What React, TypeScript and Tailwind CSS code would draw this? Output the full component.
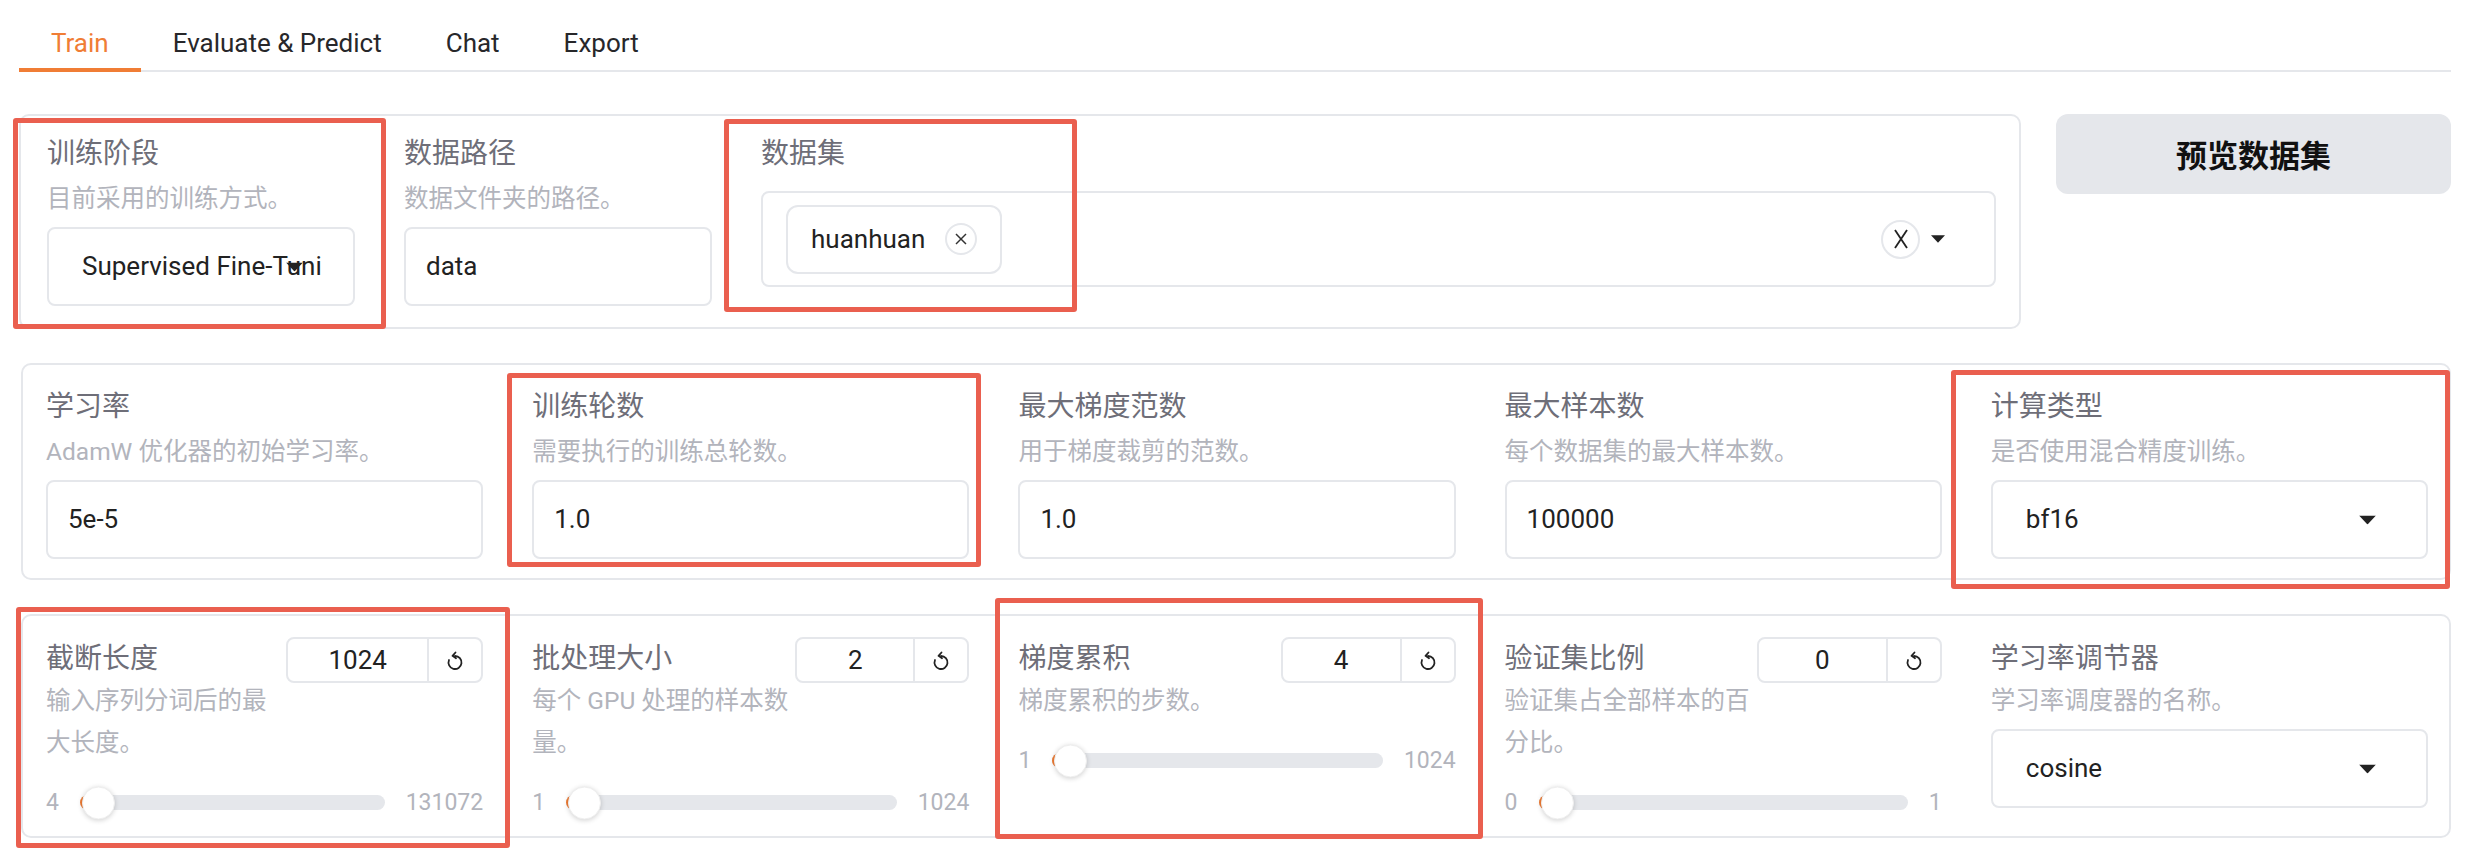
import React from "react";

const Triangle = ({ w = 17, h = 9 }: { w?: number; h?: number }) => (
  <svg width={w} height={h} viewBox="0 0 17 9" className="block">
    <polygon points="0,0 17,0 8.5,9" fill="#222" />
  </svg>
);

const XMark = ({ size = 12, stroke = 1.6 }: { size?: number; stroke?: number }) => (
  <svg width={size} height={size} viewBox="0 0 12 12" className="block">
    <line x1="1" y1="1" x2="11" y2="11" stroke="#333" strokeWidth={stroke} />
    <line x1="11" y1="1" x2="1" y2="11" stroke="#333" strokeWidth={stroke} />
  </svg>
);

const ResetIcon = () => (
  <svg width="18" height="21" viewBox="0 0 18 21" className="block" fill="none">
    <path d="M9 6 A6.5 6.5 0 1 1 3 10" stroke="#222" strokeWidth="1.8" strokeLinecap="round" />
    <path d="M9.5 2.5 L6.5 5.8 L10 8.2" stroke="#222" strokeWidth="1.8" strokeLinecap="round" strokeLinejoin="round" />
  </svg>
);

const Label = ({ children, className = "" }: { children: React.ReactNode; className?: string }) => (
  <div className={`text-[28px] leading-[36px] text-[#6e6e78] whitespace-nowrap ${className}`}>{children}</div>
);

const Desc = ({ lines, className = "" }: { lines: string[]; className?: string }) => (
  <div className={`text-[24.5px] leading-[42px] text-[#b2b4bc] ${className}`}>
    {lines.map((l, i) => (
      <div key={i} className="whitespace-nowrap">
        {l}
      </div>
    ))}
  </div>
);

const TextBox = ({ value }: { value: string }) => (
  <div className="mt-[7px] h-[79px] rounded-[8px] border-2 border-[#e5e7eb] bg-white px-[20px] flex items-center text-[26px] text-[#222]">
    {value}
  </div>
);

const Dropdown = ({ value, className = "" }: { value: string; className?: string }) => (
  <div
    className={`relative h-[79px] rounded-[8px] border-2 border-[#e5e7eb] bg-white flex items-center text-[26px] text-[#222] ${className}`}
  >
    <div className="flex-1 min-w-0 pl-[33px] pr-[31px]">
      <div className="overflow-hidden whitespace-nowrap">{value}</div>
    </div>
    <div className="absolute right-[50px] top-1/2 -translate-y-1/2">
      <Triangle />
    </div>
  </div>
);

const Field = ({ label, desc, value }: { label: string; desc: string; value: string }) => (
  <div className="flex flex-col">
    <Label>{label}</Label>
    <Desc lines={[desc]} className="mt-[6px]" />
    <TextBox value={value} />
  </div>
);

const SliderField = ({
  label,
  desc,
  value,
  numW,
  min,
  max,
}: {
  label: string;
  desc: string[];
  value: string;
  numW: number;
  min: string;
  max: string;
}) => (
  <div className="flex flex-col">
    <div className="flex items-start justify-between">
      <div className="flex flex-col">
        <Label className="mt-[4px]">{label}</Label>
        <Desc lines={desc} className="mt-[3px]" />
      </div>
      <div
        className="h-[46px] rounded-[8px] border-2 border-[#e5e7eb] flex bg-white"
        style={{ width: numW }}
      >
        <div className="flex-1 flex items-center justify-center text-[26px] text-[#222]">{value}</div>
        <div className="w-[54px] border-l-2 border-[#e5e7eb] flex items-center justify-center">
          <ResetIcon />
        </div>
      </div>
    </div>
    <div className="mt-[22px] h-[33px] flex items-center gap-[21px]">
      <div className="text-[23px] text-[#b2b4bc] leading-none">{min}</div>
      <div className="relative flex-1 h-[15px] rounded-full bg-[#e5e7eb]">
        <div className="absolute left-0 top-0 h-full w-[18px] rounded-l-full bg-[#f07d35]" />
        <div className="absolute left-[2px] top-1/2 -translate-y-1/2 w-[33px] h-[33px] rounded-full bg-white border border-[#eeeeee] shadow-[0_1px_5px_rgba(0,0,0,0.18)]" />
      </div>
      <div className="text-[23px] text-[#b2b4bc] leading-none">{max}</div>
    </div>
  </div>
);

const RedBox = ({ l, t, w, h }: { l: number; t: number; w: number; h: number }) => (
  <div
    className="absolute border-[5px] border-[#ea5f4f] rounded-[3px] pointer-events-none"
    style={{ left: l, top: t, width: w, height: h }}
  />
);

export default function App() {
  const tabs = ["Train", "Evaluate & Predict", "Chat", "Export"];
  return (
    <div className="relative w-[2476px] h-[860px] overflow-hidden bg-white pl-[19px] pr-[25px] font-[Roboto,'Noto_Sans_CJK_SC',sans-serif]">
      {/* Tabs */}
      <div className="flex border-b-2 border-[#e5e7eb]">
        {tabs.map((t, i) => (
          <div
            key={t}
            className={`relative px-[32px] pt-[25px] pb-[9px] text-[26px] leading-[36px] ${
              i === 0 ? "text-[#f07d35]" : "text-[#27272a]"
            }`}
          >
            {t}
            {i === 0 && <span className="absolute left-0 right-0 bottom-[-2px] h-[4px] bg-[#f07d35]" />}
          </div>
        ))}
      </div>

      {/* Row 1 */}
      <div className="mt-[42px] flex items-start gap-[35px]">
        <div className="flex-1 rounded-[10px] border-2 border-[#e5e7eb] pl-[26px] pr-[23px] pt-[20px] pb-[21px] flex gap-[49px] items-start">
          <div className="w-[308px] flex flex-col">
            <Label>训练阶段</Label>
            <Desc lines={["目前采用的训练方式。"]} className="mt-[6px]" />
            <Dropdown value="Supervised Fine-Tuning" className="mt-[7px]" />
          </div>
          <div className="w-[308px]">
            <Field label="数据路径" desc="数据文件夹的路径。" value="data" />
          </div>
          <div className="flex-1 flex flex-col">
            <Label>数据集</Label>
            <div className="mt-[19px] h-[96px] rounded-[8px] border-2 border-[#e5e7eb] pl-[23px] pr-[49px] flex items-center">
              <div className="h-[69px] rounded-[12px] border-2 border-[#e5e7eb] px-[23px] flex items-center gap-[20px]">
                <span className="text-[26px] text-[#222]">huanhuan</span>
                <span className="w-[32px] h-[32px] rounded-full border-2 border-[#e5e7eb] flex items-center justify-center">
                  <XMark size={12} stroke={1.5} />
                </span>
              </div>
              <div className="ml-auto flex items-center gap-[11px]">
                <span className="w-[39px] h-[39px] rounded-full border-2 border-[#e5e7eb] flex items-center justify-center">
                  <svg width="14" height="20" viewBox="0 0 14 20" className="block">
                    <line x1="1" y1="1" x2="13" y2="19" stroke="#222" strokeWidth="1.8" />
                    <line x1="13" y1="1" x2="1" y2="19" stroke="#222" strokeWidth="1.8" />
                  </svg>
                </span>
                <svg width="14" height="8" viewBox="0 0 17 9" className="block">
                  <polygon points="0,0 17,0 8.5,9" fill="#222" />
                </svg>
              </div>
            </div>
          </div>
        </div>
        <div className="w-[395px] h-[80px] rounded-[12px] bg-[#e5e7eb] flex items-center justify-center text-[31px] font-bold text-[#111] font-['Noto_Sans_CJK_SC',sans-serif]">
          预览数据集
        </div>
      </div>

      {/* Row 2 */}
      <div className="mt-[34px] ml-[2px] rounded-[10px] border-2 border-[#e5e7eb] pl-[23px] pr-[21px] pt-[24px] pb-[19px] grid grid-cols-5 gap-x-[49px]">
        <Field label="学习率" desc="AdamW 优化器的初始学习率。" value="5e-5" />
        <Field label="训练轮数" desc="需要执行的训练总轮数。" value="1.0" />
        <Field label="最大梯度范数" desc="用于梯度裁剪的范数。" value="1.0" />
        <Field label="最大样本数" desc="每个数据集的最大样本数。" value="100000" />
        <div className="flex flex-col">
          <Label>计算类型</Label>
          <Desc lines={["是否使用混合精度训练。"]} className="mt-[6px]" />
          <Dropdown value="bf16" className="mt-[7px]" />
        </div>
      </div>

      {/* Row 3 */}
      <div className="mt-[34px] ml-[2px] rounded-[10px] border-2 border-[#e5e7eb] pl-[23px] pr-[21px] pt-[21px] pb-[17px] grid grid-cols-5 gap-x-[49px] items-start">
        <SliderField
          label="截断长度"
          desc={["输入序列分词后的最", "大长度。"]}
          value="1024"
          numW={197}
          min="4"
          max="131072"
        />
        <SliderField
          label="批处理大小"
          desc={["每个 GPU 处理的样本数", "量。"]}
          value="2"
          numW={174}
          min="1"
          max="1024"
        />
        <SliderField label="梯度累积" desc={["梯度累积的步数。"]} value="4" numW={175} min="1" max="1024" />
        <SliderField
          label="验证集比例"
          desc={["验证集占全部样本的百", "分比。"]}
          value="0"
          numW={185}
          min="0"
          max="1"
        />
        <div className="flex flex-col">
          <Label className="mt-[4px]">学习率调节器</Label>
          <Desc lines={["学习率调度器的名称。"]} className="mt-[3px]" />
          <Dropdown value="cosine" className="mt-[7px]" />
        </div>
      </div>

      {/* Annotation boxes */}
      <RedBox l={13} t={118} w={373} h={211} />
      <RedBox l={724} t={119} w={353} h={193} />
      <RedBox l={507} t={373} w={474} h={194} />
      <RedBox l={1951} t={370} w={499} h={219} />
      <RedBox l={16} t={607} w={494} h={241} />
      <RedBox l={995} t={598} w={488} h={241} />
    </div>
  );
}
